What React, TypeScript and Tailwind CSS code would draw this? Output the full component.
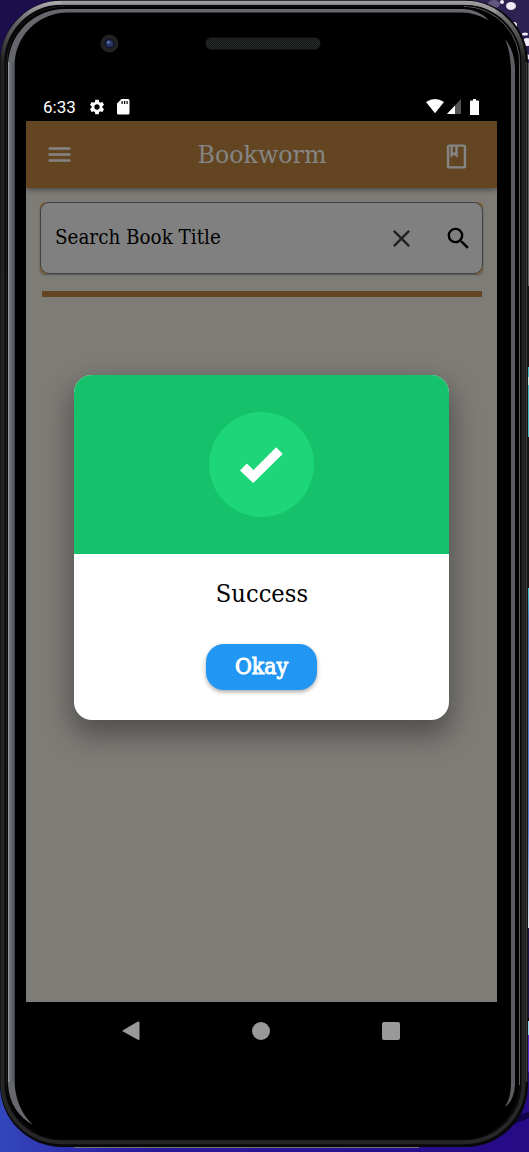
import React from "react";
import { MdMenu, MdOutlineBook, MdClose, MdSearch, MdSettings } from "react-icons/md";

const serif = "font-['DejaVu_Serif_Condensed','DejaVu_Serif',serif] [font-stretch:condensed]";

function PhoneFrame() {
  return (
    <svg className="absolute inset-0" width="529" height="1152" viewBox="0 0 529 1152" aria-hidden="true">
      <defs>
        <linearGradient id="wall" x1="0" y1="0" x2="1" y2="0">
          <stop offset="0" stopColor="#3347bd" />
          <stop offset="0.25" stopColor="#2a1b9c" />
          <stop offset="1" stopColor="#260a86" />
        </linearGradient>
        <linearGradient id="edge" x1="0" y1="0" x2="0" y2="1">
          <stop offset="0" stopColor="#39c8c8" />
          <stop offset="0.1" stopColor="#4f7fc9" />
          <stop offset="0.7" stopColor="#5a82d8" />
          <stop offset="1" stopColor="#d8e4ec" />
        </linearGradient>
        <linearGradient id="rim" x1="0" y1="0" x2="0" y2="1">
          <stop offset="0" stopColor="#aaa8ad" />
          <stop offset="0.015" stopColor="#6b6b6e" />
          <stop offset="0.05" stopColor="#222222" />
          <stop offset="1" stopColor="#262626" />
        </linearGradient>
        <linearGradient id="side" x1="0" y1="0" x2="1" y2="0">
          <stop offset="0" stopColor="#a1a3a5" />
          <stop offset="0.25" stopColor="#6c7379" />
          <stop offset="1" stopColor="#50555c" />
        </linearGradient>
        <pattern id="mesh" width="2" height="2" patternUnits="userSpaceOnUse">
          <rect width="2" height="2" fill="#161817" />
          <rect width="1" height="1" fill="#282b29" />
          <rect x="1" y="1" width="1" height="1" fill="#252826" />
        </pattern>
      </defs>
      <rect width="529" height="100" fill="#1c0d4c" />
      <rect x="440" width="89" height="63" fill="#2d2252" />
      <g fill="#f1e9f5">
        <ellipse cx="511" cy="6" rx="5" ry="4" />
        <circle cx="502" cy="2" r="2" />
        <circle cx="514" cy="25" r="3" />
        <ellipse cx="525" cy="34" rx="3" ry="1.6" />
        <circle cx="527" cy="42" r="4" />
        <circle cx="528" cy="57" r="2.5" />
      </g>
      <ellipse cx="494" cy="4" rx="6" ry="4" fill="#62577c" />
      <rect x="526" y="63" width="3" height="223" fill="#666666" />
      <rect x="526" y="286" width="3" height="302" fill="#151515" />
      <rect x="526" y="367" width="3" height="70" fill="#43bfc4" />
      <rect x="526" y="377" width="3" height="8" fill="#bdebe3" />
      <rect x="526" y="588" width="3" height="340" fill="url(#edge)" />
      <rect x="526" y="928" width="3" height="90" fill="#211746" />
      <rect y="1050" width="529" height="102" fill="url(#wall)" />
      <rect x="520" y="1021" width="9" height="14" fill="#88d4ed" />
      <rect x="520" y="1035" width="9" height="37" fill="#5529ce" />
      <path d="M470 1129 529 1112V1118L490 1134Z" fill="#120449" />

      <rect x="0" y="0" width="528" height="1147" rx="62" fill="#080808" />
      <rect x="2.5" y="2.8" width="521" height="1139.400" rx="59" fill="none" stroke="url(#rim)" strokeWidth="4" />
      <path d="M62 2.8H464Q482 3 496 12" fill="none" stroke="#99979c" strokeWidth="3" />
      <path d="M6.800 1085V66A58 58 0 0 1 64 6.500" fill="none" stroke="#303030" strokeWidth="0.800" />
      <path d="M464 6.500A56 56 0 0 1 519.500 66V1085" fill="none" stroke="#5a5a5a" strokeWidth="1" />
      <path d="M526.500 62V1082" stroke="#3c3c3c" strokeWidth="1.500" />
      <rect x="7.500" y="7" width="511" height="1132.500" rx="56" fill="#000000" />
      <path d="M8 1085V66A57 57 0 0 1 66 9H464Q480 10 489 20.500Q476 12.800 462 12.500H68A53 53 0 0 0 14.500 66V1080Q15 1108 33 1125Q10 1112 8 1085Z" fill="#65676d" />
      <rect x="8" y="62" width="6.500" height="1020" fill="url(#side)" />
      <path d="M505 39Q514 49 515 68V1085Q514 1101 505 1107Q511 1098 511 1082V70Q510 50 505 39Z" fill="#5b5d62" />
      <path d="M74 1147.500H419" stroke="#777777" strokeWidth="1" />

      <circle cx="109.500" cy="43.500" r="9" fill="#222222" />
      <circle cx="109.500" cy="43.500" r="5" fill="#0f1328" />
      <circle cx="109.500" cy="43.500" r="3.600" fill="#283565" />
      <circle cx="108.500" cy="42.200" r="1.200" fill="#6f80b5" />
      <rect x="206" y="38" width="114" height="11" rx="5" fill="url(#mesh)" stroke="#242625" strokeWidth="0.700" />
    </svg>
  );
}

function StatusBar() {
  return (
    <div className="flex h-[31px] items-center pt-[2px] pl-[17px] pr-[18px] text-white">
      <span className="mt-px w-[47px] font-['Roboto',sans-serif] text-[17px] leading-none">6:33</span>
      <MdSettings size={18} className="-ml-[2px]" />
      <svg className="ml-[11px]" width="13" height="16" viewBox="0 0 13 16">
        <path fillRule="evenodd" fill="currentColor" d="M4.500 0H11Q12.500 0 12.500 1.500V14Q12.500 15.500 11 15.500H1.500Q0 15.500 0 14V4.500ZM4.500 2V5H5.700V2ZM7 2V5H8.200V2ZM9.500 2V5H10.700V2Z" />
      </svg>
      <span className="flex-1" />
      <svg width="18" height="15" viewBox="0 0 18 15">
        <path fill="currentColor" d="M0 3Q9-2.800 18 3L9 14.300Z" />
      </svg>
      <svg className="ml-[3px]" width="14" height="15" viewBox="0 0 14 15">
        <path fill="#555555" d="M14 0V15H0Z" />
        <path fill="currentColor" d="M8 6.500V15H0Z" />
      </svg>
      <svg className="ml-[9px]" width="9" height="16" viewBox="0 0 9 16">
        <path fill="currentColor" d="M3 0H6V1.500H8Q9 1.500 9 2.500V16H0V2.500Q0 1.500 1 1.500H3Z" />
      </svg>
    </div>
  );
}

function AppBar() {
  return (
    <header className="relative flex h-[67px] items-center justify-between bg-[#634522] pl-[19px] pr-[26px] text-[#858585] shadow-[0_2px_5px_rgba(0,0,0,0.4)]">
      <MdMenu size={29} />
      <h1 className={`${serif} ml-[7px] w-[130px] scale-x-110 text-center text-[24px] leading-none whitespace-nowrap`}>Bookworm</h1>
      <MdOutlineBook size={29} className="mt-[4px]" />
    </header>
  );
}

function SearchField() {
  return (
    <div className="mx-[14px] mt-[14px] h-[72px] rounded-[5px] bg-[#80653a] shadow-[0_1px_2px_rgba(0,0,0,0.3)]">
      <div className="flex h-full items-center rounded-[9px] border-[1.5px] border-[#404040] bg-[#808080] pl-[14px] pr-[9px]">
        <span className={`${serif} mb-[2px] origin-left scale-x-[1.02] text-[20px] leading-none whitespace-nowrap text-black`}>Search Book Title</span>
        <span className="flex-1" />
        <MdClose size={29} className="text-[#202020]" />
        <MdSearch size={29} className="ml-[28px] text-black" />
      </div>
    </div>
  );
}

function SuccessDialog() {
  return (
    <div role="dialog" className="absolute top-[285px] left-[48px] flex h-[345px] w-[375px] flex-col overflow-hidden rounded-[18px] bg-white shadow-[0_13px_28px_3px_rgba(0,0,0,0.36)]">
      <div className="flex h-[179px] shrink-0 items-center justify-center bg-[#15c26b]">
        <div className="flex size-[105px] items-center justify-center rounded-full bg-[#1cd679]">
          <svg width="43" height="36" viewBox="0 0 43 36">
            <path fill="#fff" d="M0 23.500 6.800 16.500 13.500 23 36.200.3 42.700 7 13.200 36Z" />
          </svg>
        </div>
      </div>
      <div className="flex flex-col items-center">
        <p className={`${serif} mt-[27px] scale-x-[1.05] text-[24px] leading-[26px] text-black`}>Success</p>
        <button className={`${serif} mt-[37px] h-[46px] w-[111px] rounded-[18px] bg-[#2196f3] text-[22px] leading-none text-white shadow-[0_2px_4px_rgba(0,0,0,0.35)]`}>
          <span className="inline-block scale-x-[1.04] pb-px [-webkit-text-stroke:0.9px_white]">Okay</span>
        </button>
      </div>
    </div>
  );
}

function NavigationBar() {
  return (
    <nav className="flex h-[58px] items-center justify-between pl-[96px] pr-[97px]">
      <svg width="18" height="20" viewBox="0 0 18 20"><path d="M.5 9.500 15.500.7Q17.500 0 17.500 1.500V18Q17.500 19.500 15.500 18.500L.5 10.200Z" fill="#999999" /></svg>
      <span className="size-[18px] rounded-full bg-[#999999]" />
      <span className="size-[18px] rounded-[2px] bg-[#999999]" />
    </nav>
  );
}

export default function App() {
  return (
    <div className="relative h-[1152px] w-[529px] overflow-hidden bg-black pt-[90px] pl-[26px]">
      <PhoneFrame />
      <div className="relative w-[471px] bg-black">
        <StatusBar />
        <main className="h-[881px] bg-[#7e7c77]">
          <AppBar />
          <SearchField />
          <div className="mx-[15.5px] mt-[17px] h-[6px] bg-[#634522]" />
        </main>
        <NavigationBar />
        <SuccessDialog />
      </div>
    </div>
  );
}
